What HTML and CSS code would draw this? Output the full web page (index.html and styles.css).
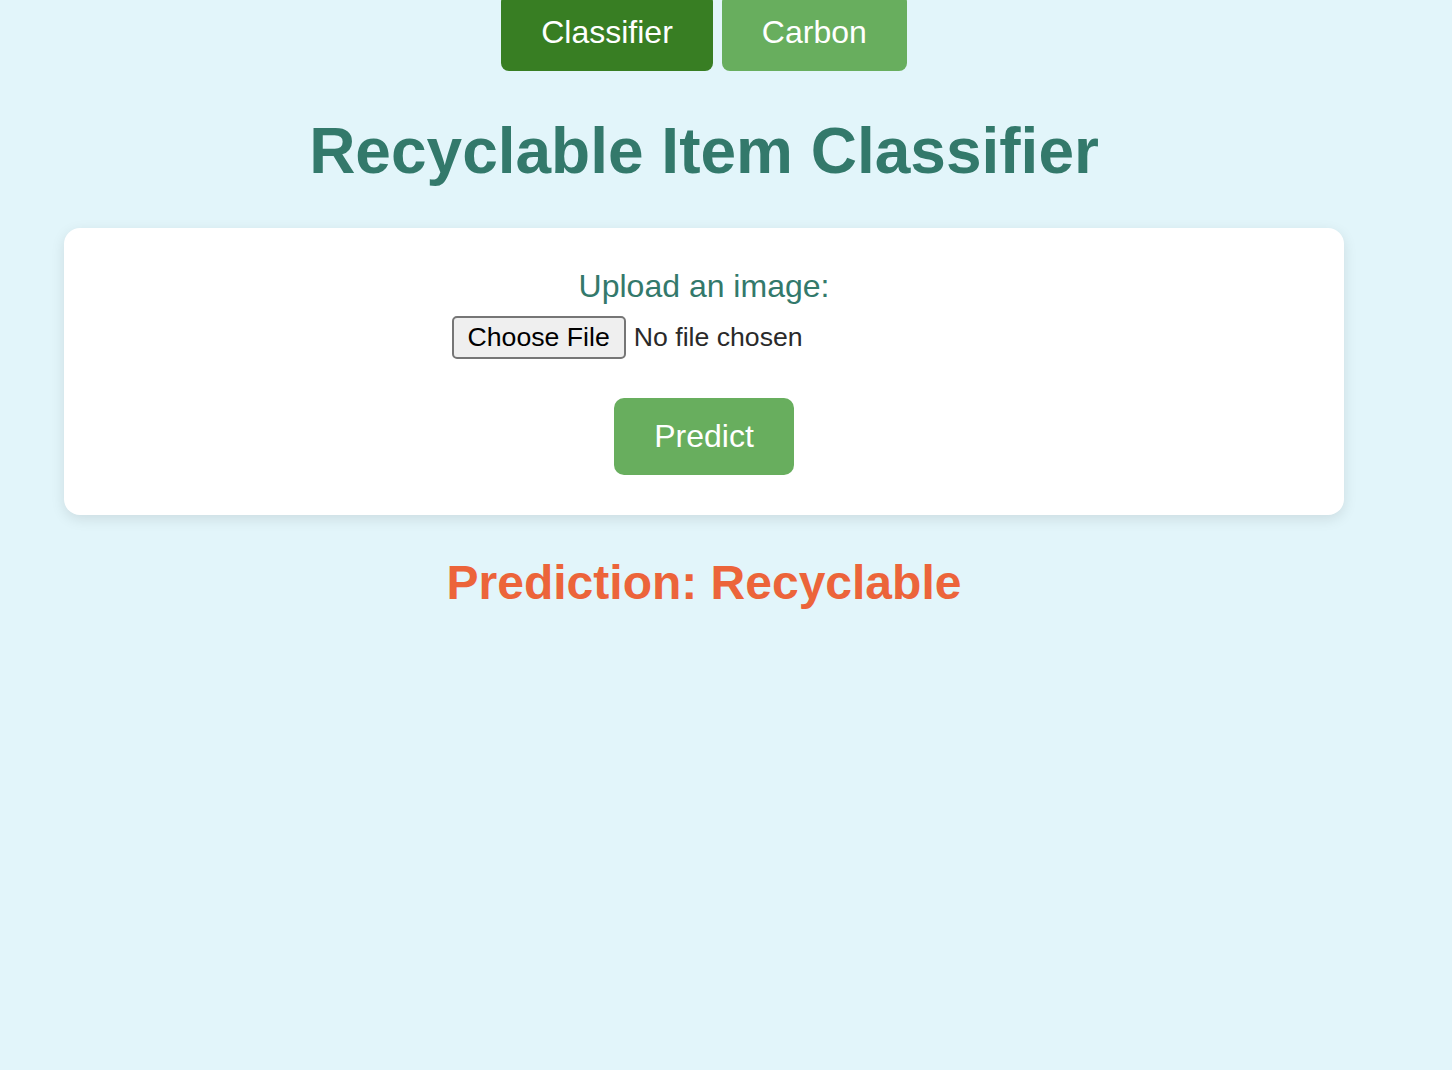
FILE: index.html
```html
<!DOCTYPE html>
<html lang="en">
<head>
<meta charset="utf-8">
<title>Recyclable Item Classifier</title>
<link rel="stylesheet" href="styles.css">
</head>
<body>
<div class="page">
  <nav class="nav">
    <button class="nav-btn nav-btn--active" type="button">Classifier</button>
    <button class="nav-btn" type="button">Carbon</button>
  </nav>
  <h1 class="title">Recyclable Item Classifier</h1>
  <form class="card">
    <label class="upload-label" for="file">Upload an image:</label>
    <div class="file-row"><input class="file-input" id="file" type="file"></div>
    <button class="predict-btn" type="button">Predict</button>
  </form>
  <h2 class="result">Prediction: Recyclable</h2>
</div>
</body>
</html>
```

FILE: styles.css
```css
html, body {
  margin: 0;
  padding: 0;
  background: #e2f5fa;
  font-family: "Liberation Sans", Arial, sans-serif;
}

.page {
  width: 1408px;
  text-align: center;
}

.nav {
  display: flex;
  justify-content: center;
  gap: 9px;
  margin-top: -6px;
}

.nav-btn {
  font-family: "Liberation Sans", Arial, sans-serif;
  font-size: 32px;
  line-height: 37px;
  color: #ffffff;
  background: #68ae5e;
  border: none;
  border-radius: 8px;
  padding: 20px 40px;
  cursor: pointer;
}

.nav-btn--active {
  background: #387e23;
}

.title {
  margin: 43px 0 40px;
  font-size: 64px;
  line-height: 74px;
  font-weight: bold;
  color: #33796b;
}

.card {
  box-sizing: border-box;
  width: 1280px;
  margin: 0 auto;
  padding: 40px;
  background: #ffffff;
  border-radius: 16px;
  box-shadow: 0 4px 14px rgba(0, 0, 0, 0.1);
  display: flex;
  flex-direction: column;
  align-items: center;
}

.upload-label {
  font-size: 32px;
  line-height: 37px;
  color: #33796b;
}

.file-row {
  margin-top: 11px;
  display: flex;
  justify-content: center;
}

.file-input {
  zoom: 2;
  font-family: "Liberation Sans", Arial, sans-serif;
  font-size: 13.333px;
  color: #2a2a2a;
}

.predict-btn {
  margin-top: 39px;
  font-family: "Liberation Sans", Arial, sans-serif;
  font-size: 32px;
  line-height: 37px;
  color: #ffffff;
  background: #68ae5e;
  border: none;
  border-radius: 10px;
  padding: 20px 40px;
  cursor: pointer;
}

.result {
  margin: 40px 0 0;
  font-size: 48px;
  line-height: 55px;
  font-weight: bold;
  color: #ec643a;
}
```
